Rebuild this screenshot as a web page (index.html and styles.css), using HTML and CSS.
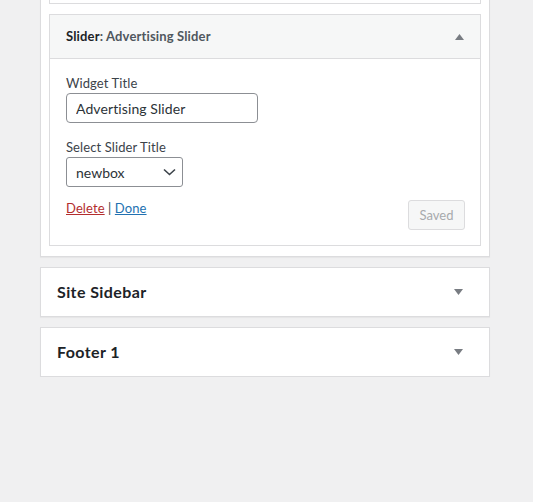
FILE: index.html
```html
<!DOCTYPE html>
<html lang="en">
<head>
<meta charset="utf-8">
<title>Widgets</title>
<link rel="stylesheet" href="styles.css">
</head>
<body>
<div class="page">
  <div class="sidebar open">
    <div class="widget stub"></div>
    <div class="widget">
      <div class="widget-top">
        <h3 class="widget-title">Slider<span class="in-title">: Advertising Slider</span></h3>
        <svg class="tri" width="9" height="6" viewBox="0 0 9 6"><polygon points="4.5,0 9,6 0,6" fill="#787c82"/></svg>
      </div>
      <div class="widget-inside">
        <label class="lbl">Widget Title</label>
        <input class="txt" type="text" value="Advertising Slider">
        <label class="lbl lbl2">Select Slider Title</label>
        <div class="select">
          <span>newbox</span>
          <svg width="13" height="8" viewBox="0 0 13 8"><polyline points="1,1.5 6.5,6.5 12,1.5" fill="none" stroke="#3c434a" stroke-width="1.6"/></svg>
        </div>
        <div class="actions">
          <div class="links"><a class="del" href="#">Delete</a> | <a class="done" href="#">Done</a></div>
          <button class="saved" type="button">Saved</button>
        </div>
      </div>
    </div>
  </div>
  <div class="sidebar closed">
    <h2 class="sb-name">Site Sidebar</h2>
    <svg class="tri" width="9" height="6" viewBox="0 0 9 6"><polygon points="0,0 9,0 4.5,6" fill="#787c82"/></svg>
  </div>
  <div class="sidebar closed">
    <h2 class="sb-name">Footer 1</h2>
    <svg class="tri" width="9" height="6" viewBox="0 0 9 6"><polygon points="0,0 9,0 4.5,6" fill="#787c82"/></svg>
  </div>
</div>
</body>
</html>
```

FILE: styles.css
```css
html, body {
  margin: 0;
  padding: 0;
  background: #f0f0f1;
  font-family: Lato, "Noto Sans", sans-serif;
  color: #3c434a;
}
.page {
  margin: -30px 0 0 40px;
  width: 450px;
  display: flex;
  flex-direction: column;
  gap: 10px;
}
.sidebar {
  background: #fff;
  border: 1px solid #dcdcde;
  box-shadow: 0 1px 1px rgba(0,0,0,0.04);
  box-sizing: border-box;
}
.sidebar.open {
  padding: 0 8px 10px;
}
.widget {
  border: 1px solid #dcdcde;
  background: #fff;
}
.widget.stub {
  border-top: none;
  height: 32px;
}
.widget + .widget {
  margin-top: 10px;
}
.widget-top {
  background: #f6f7f7;
  height: 43px;
  box-sizing: border-box;
  padding: 0 16px 0 16px;
  display: flex;
  align-items: center;
  justify-content: space-between;
}
.widget-title {
  margin: 0;
  font-size: 13px;
  font-weight: 700;
  color: #1d2327;
  line-height: 1;
  letter-spacing: 0.15px;
}
.in-title {
  color: #50575e;
  font-weight: 700;
}
.tri {
  display: block;
}
.widget-inside {
  border-top: 1px solid #dcdcde;
  padding: 14px 15px 15px 16px;
}
.lbl {
  display: block;
  font-size: 13px;
  line-height: 20px;
  margin-bottom: 0;
  color: #3c434a;
  letter-spacing: 0.1px;
}
.lbl2 {
  margin-top: 14px;
}
.txt {
  display: block;
  box-sizing: border-box;
  width: 192px;
  height: 30px;
  margin: 0;
  padding: 0 9px;
  border: 1px solid #8c8f94;
  border-radius: 4px;
  font-family: inherit;
  font-size: 14px;
  color: #2c3338;
  background: #fff;
  outline: none;
  letter-spacing: 0.1px;
}
.select {
  box-sizing: border-box;
  width: 117px;
  height: 30px;
  border: 1px solid #8c8f94;
  border-radius: 3px;
  padding: 0 6px 0 9px;
  display: flex;
  align-items: center;
  justify-content: space-between;
  font-size: 14px;
  color: #2c3338;
}
.actions {
  margin-top: 13px;
  display: flex;
  justify-content: space-between;
  align-items: flex-start;
}
.links {
  font-size: 13px;
  line-height: 16px;
  color: #3c434a;
  letter-spacing: 0.1px;
}
.del {
  color: #b32d2e;
}
.done {
  color: #2271b1;
}
.saved {
  box-sizing: border-box;
  height: 30px;
  width: 57px;
  padding: 0;
  margin: 0;
  border: 1px solid #dcdcde;
  border-radius: 3px;
  background: #f6f7f7;
  color: #a7aaad;
  font-family: inherit;
  font-size: 13px;
}
.sidebar.closed {
  height: 50px;
  padding: 0 26px 0 16px;
  display: flex;
  align-items: center;
  justify-content: space-between;
}
.sb-name {
  margin: 0;
  font-size: 16px;
  font-weight: 700;
  color: #1d2327;
  line-height: 1;
  letter-spacing: 0.4px;
}
```
